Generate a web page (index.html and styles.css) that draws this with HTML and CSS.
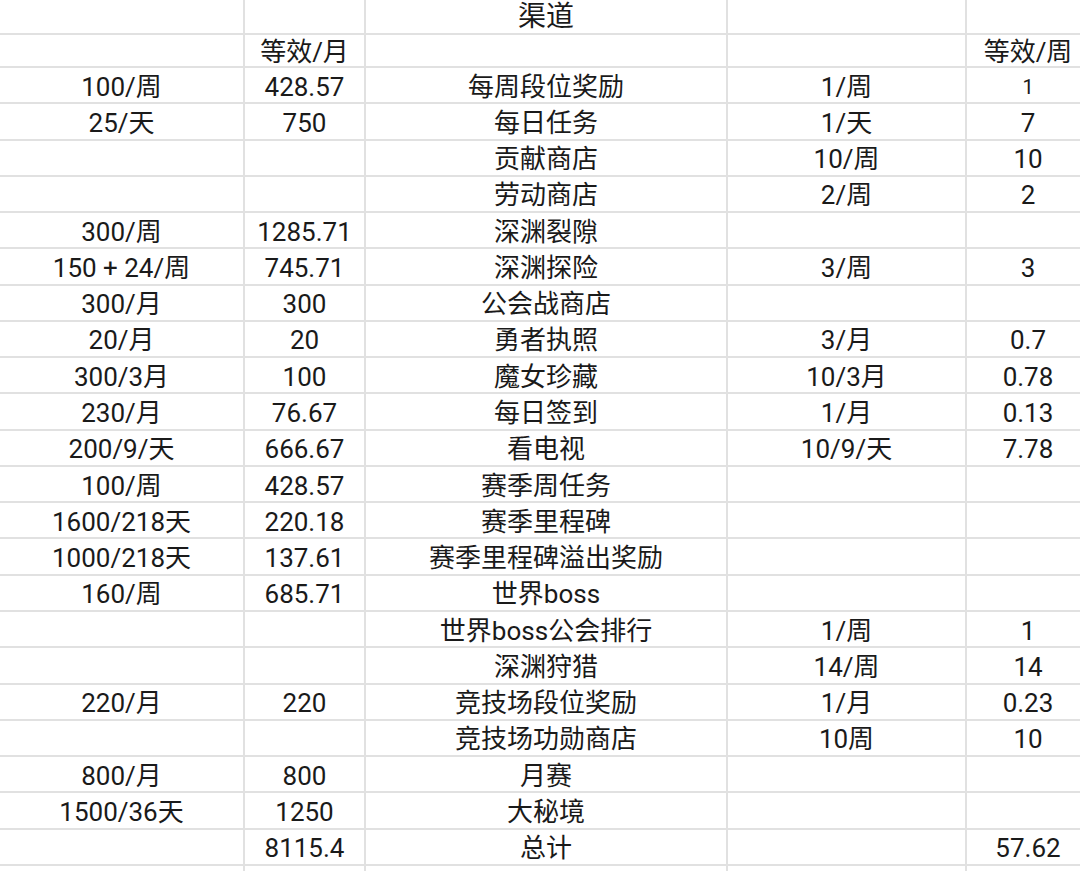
FILE: index.html
```html
<!DOCTYPE html>
<html lang="zh-CN">
<head>
<meta charset="utf-8">
<title>渠道</title>
<link rel="stylesheet" href="styles.css">
</head>
<body>
<div class="sheet">
  <div class="c"></div><div class="c"></div><div class="c title">渠道</div><div class="c"></div><div class="c"></div>
  <div class="c"></div><div class="c">等效/月</div><div class="c"></div><div class="c"></div><div class="c">等效/周</div>

  <div class="c">100/周</div><div class="c">428.57</div><div class="c">每周段位奖励</div><div class="c">1/周</div><div class="c small">1</div>
  <div class="c">25/天</div><div class="c">750</div><div class="c">每日任务</div><div class="c">1/天</div><div class="c">7</div>
  <div class="c"></div><div class="c"></div><div class="c">贡献商店</div><div class="c">10/周</div><div class="c">10</div>
  <div class="c"></div><div class="c"></div><div class="c">劳动商店</div><div class="c">2/周</div><div class="c">2</div>
  <div class="c">300/周</div><div class="c">1285.71</div><div class="c">深渊裂隙</div><div class="c"></div><div class="c"></div>
  <div class="c">150 + 24/周</div><div class="c">745.71</div><div class="c">深渊探险</div><div class="c">3/周</div><div class="c">3</div>
  <div class="c">300/月</div><div class="c">300</div><div class="c">公会战商店</div><div class="c"></div><div class="c"></div>
  <div class="c">20/月</div><div class="c">20</div><div class="c">勇者执照</div><div class="c">3/月</div><div class="c">0.7</div>
  <div class="c">300/3月</div><div class="c">100</div><div class="c">魔女珍藏</div><div class="c">10/3月</div><div class="c">0.78</div>
  <div class="c">230/月</div><div class="c">76.67</div><div class="c">每日签到</div><div class="c">1/月</div><div class="c">0.13</div>
  <div class="c">200/9/天</div><div class="c">666.67</div><div class="c">看电视</div><div class="c">10/9/天</div><div class="c">7.78</div>
  <div class="c">100/周</div><div class="c">428.57</div><div class="c">赛季周任务</div><div class="c"></div><div class="c"></div>
  <div class="c">1600/218天</div><div class="c">220.18</div><div class="c">赛季里程碑</div><div class="c"></div><div class="c"></div>
  <div class="c">1000/218天</div><div class="c">137.61</div><div class="c">赛季里程碑溢出奖励</div><div class="c"></div><div class="c"></div>
  <div class="c">160/周</div><div class="c">685.71</div><div class="c">世界boss</div><div class="c"></div><div class="c"></div>
  <div class="c"></div><div class="c"></div><div class="c">世界boss公会排行</div><div class="c">1/周</div><div class="c">1</div>
  <div class="c"></div><div class="c"></div><div class="c">深渊狩猎</div><div class="c">14/周</div><div class="c">14</div>
  <div class="c">220/月</div><div class="c">220</div><div class="c">竞技场段位奖励</div><div class="c">1/月</div><div class="c">0.23</div>
  <div class="c"></div><div class="c"></div><div class="c">竞技场功勋商店</div><div class="c">10周</div><div class="c">10</div>
  <div class="c">800/月</div><div class="c">800</div><div class="c">月赛</div><div class="c"></div><div class="c"></div>
  <div class="c">1500/36天</div><div class="c">1250</div><div class="c">大秘境</div><div class="c"></div><div class="c"></div>
  <div class="c"></div><div class="c">8115.4</div><div class="c">总计</div><div class="c"></div><div class="c">57.62</div>

  <div class="c"></div><div class="c"></div><div class="c"></div><div class="c"></div><div class="c"></div>
</div>
</body>
</html>
```

FILE: styles.css
```css
html, body {
  margin: 0;
  padding: 0;
  background: #ffffff;
}
body {
  width: 1080px;
  height: 871px;
  overflow: hidden;
}
.sheet {
  display: grid;
  grid-template-columns: 243px 119px 360px 237px 122px;
  grid-template-rows: 33px 31px repeat(22, 34.27px) 20px;
  column-gap: 2px;
  row-gap: 2px;
  background: #e1e1e1;
  width: max-content;
  font-family: "Roboto", "Noto Sans CJK SC", sans-serif;
  font-size: 26px;
  color: #1a1a1a;
}
.c {
  background: #ffffff;
  display: flex;
  align-items: center;
  justify-content: center;
  white-space: nowrap;
  line-height: 1;
  padding-top: 3px;
}
.title {
  font-size: 28px;
  padding-top: 0;
}
.small {
  font-size: 20px;
}
```
